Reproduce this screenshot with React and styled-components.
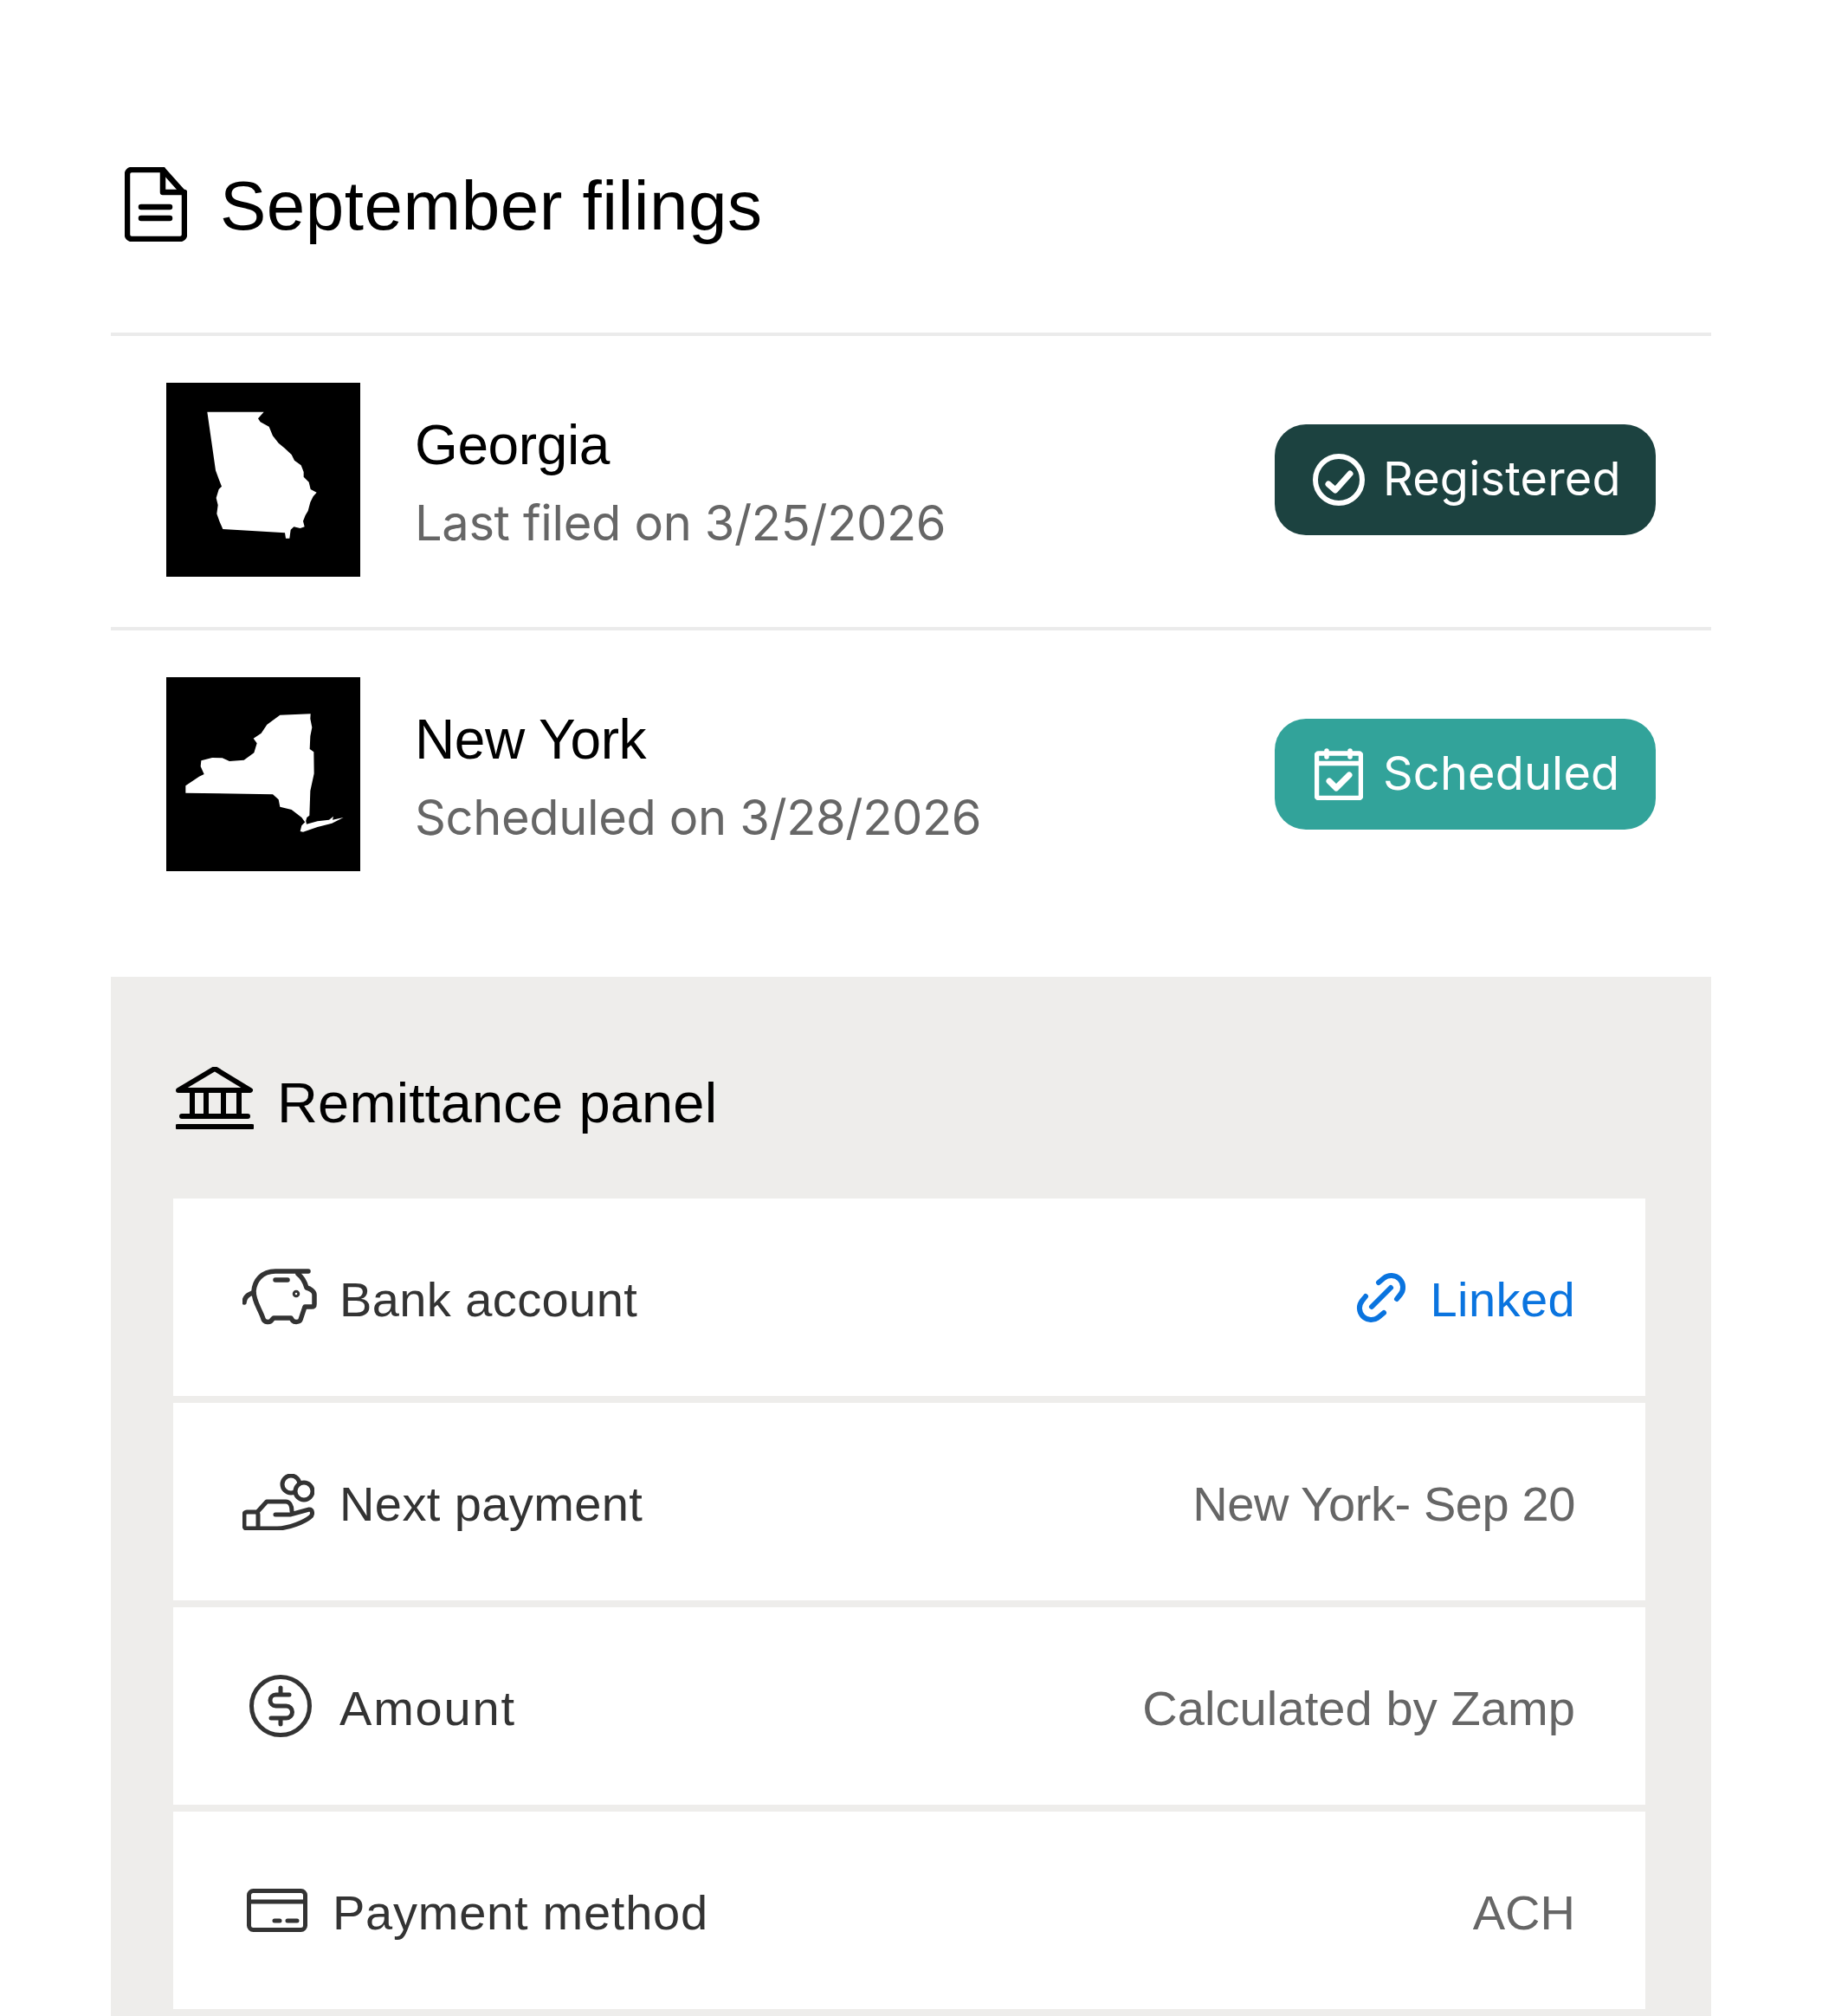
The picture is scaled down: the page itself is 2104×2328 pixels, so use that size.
import styled, { createGlobalStyle } from 'styled-components';

const GlobalStyle = createGlobalStyle`
body {
  margin: 0;
  background: #fff;
  font-family: "Liberation Sans", Arial, sans-serif;
}
`

const Page = styled.div`
padding: 0 128px;
width: 1848px;
`
const Header = styled.div`
display: flex;
align-items: center;
gap: 38px;
height: 86px;
padding: 193px 0 105px 16px;
`
const Heading = styled.h1`
margin: 0;
padding-top: 4px;
font-size: 80px;
font-weight: 400;
letter-spacing: 0.5px;
line-height: 86px;
color: #000;
`
const FilingRow = styled.div`
display: flex;
align-items: center;
gap: 64px;
padding: 54px 64px 58px;
border-top: 4px solid #ebebeb;
`
const StateMap = styled.svg`
display: block;
width: 224px;
height: 224px;
flex-shrink: 0;
`
const FilingText = styled.div`
flex: 1;
padding-top: 10px;
margin-left: -1px;
`
const StateName = styled.div`
font-size: 64px;
letter-spacing: -0.4px;
line-height: 90px;
color: #000;
`
const FiledOn = styled.div`
font-family: Inter, sans-serif;
font-size: 56px;
letter-spacing: -0.35px;
line-height: 90px;
color: #666;
`
const Badge = styled.div`
display: flex;
align-items: center;
gap: 22px;
box-sizing: border-box;
width: 440px;
height: 128px;
padding-left: 44px;
border-radius: 36px;
color: #fff;
background: ${p => p.$bg};
font-family: Inter, sans-serif;
font-size: 54px;
letter-spacing: 0.2px;
`
const BadgeLabel = styled.span`
margin-top: -4px;
margin-left: -1px;
`
const CalendarWrap = styled.span`
display: block;
margin: 0 2px;
`
const Panel = styled.div`
margin-top: 64px;
padding: 104px 76px 8px 72px;
background: #eeedeb;
`
const PanelTitle = styled.div`
display: flex;
align-items: center;
gap: 27px;
height: 72px;
margin: 0 0 80px 3px;
font-size: 65px;
letter-spacing: 0.15px;
color: #000;
`
const PanelHeading = styled.span`
padding-top: 10px;
`
const Cards = styled.div`
display: flex;
flex-direction: column;
gap: 8px;
`
const Card = styled.div`
display: flex;
align-items: center;
justify-content: space-between;
height: 228px;
padding: 0 81px 0 80px;
background: #fff;
font-size: 56px;
`
const Label = styled.div`
display: flex;
align-items: center;
color: #333;
letter-spacing: ${p => p.$ls || 0.4}px;
`
const IconSlot = styled.div`
display: flex;
justify-content: ${p => p.$left ? 'flex-start' : 'center'};
width: ${p => p.$w || 86}px;
margin-right: ${p => p.$gap || 26}px;
`
const Value = styled.div`
display: flex;
align-items: center;
gap: 28px;
color: ${p => p.$color || '#666'};
letter-spacing: ${p => p.$ls || 0}px;
`
const CardText = styled.span`
padding-top: 5px;
`

const Stroke = styled.svg`
display: block;
fill: none;
stroke: currentColor;
stroke-width: ${p => p.$sw || 5};
stroke-linecap: round;
stroke-linejoin: round;
`

const GEORGIA = '178,137 374,137 354,160 362,172 392,188 405,220 425,245 445,262 470,285 480,305 503,322 512,345 512,362 530,380 536,405 557,416 545,430 535,450 527,480 518,495 510,515 515,535 500,540 478,535 467,545 463,575 450,575 447,556 232,543 220,515 211,490 215,460 209,435 218,405 228,395 218,370 207,340'
const NEW_YORK = '103,412 150,380 167,372 155,345 157,325 195,315 230,316 255,327 305,323 340,298 350,265 338,248 365,230 385,200 430,167 536,163 535,180 541,210 535,240 533,285 547,295 548,370 535,430 532,515 523,522 518,540 505,522 470,495 430,485 425,460 405,442 103,437'
const LONG_ISLAND = '505,550 520,535 522,545 560,535 600,530 615,518 612,530 650,522 610,542 560,555 510,572 500,570'

const Map = ({ shapes }) => (
  <StateMap viewBox="36 36 672 672">
    <rect x="36" y="36" width="672" height="672" fill="#000" />
    {shapes.map(s => <polygon key={s} points={s} fill="#fff" />)}
  </StateMap>
)

const App = () => {
  return (
    <>
      <GlobalStyle />
      <Page>
        <Header>
          <Stroke width="72" height="86" viewBox="0 0 72 86" $sw={6.5} color="#000">
            <path d="M3 8a5 5 0 0 1 5-5h36l25 28v47a5 5 0 0 1-5 5H8a5 5 0 0 1-5-5z" />
            <path d="M44 3v26h25M19 46h33M19 59h33" />
          </Stroke>
          <Heading>September filings</Heading>
        </Header>

        <FilingRow>
          <Map shapes={[GEORGIA]} />
          <FilingText>
            <StateName>Georgia</StateName>
            <FiledOn>Last filed on 3/25/2026</FiledOn>
          </FilingText>
          <Badge $bg="#1c4240">
            <Stroke width="60" height="60" viewBox="0 0 60 60" $sw={6}>
              <circle cx="30" cy="30" r="27" />
              <path d="M18 35l8 7 17-19" strokeWidth="7" />
            </Stroke>
            <BadgeLabel>Registered</BadgeLabel>
          </Badge>
        </FilingRow>
        <FilingRow>
          <Map shapes={[NEW_YORK, LONG_ISLAND]} />
          <FilingText>
            <StateName>New York</StateName>
            <FiledOn>Scheduled on 3/28/2026</FiledOn>
          </FilingText>
          <Badge $bg="#32a39a">
            <CalendarWrap>
              <Stroke width="56" height="60" viewBox="0 0 56 60" $sw={5.5}>
                <rect x="2.5" y="6" width="51" height="51.5" rx="2" />
                <path d="M2.5 17.5h51M14 3v7M41 3v7" />
                <path d="M17 38l8 8 15-15" strokeWidth="7" />
              </Stroke>
            </CalendarWrap>
            <BadgeLabel>Scheduled</BadgeLabel>
          </Badge>
        </FilingRow>

        <Panel>
          <PanelTitle>
            <Stroke width="90" height="72" viewBox="0 0 90 72" $sw={6} color="#000">
              <path d="M3 27L45 2l41 25zM19 27v30M35 27v30M55 27v30M73 27v30M7 57h76" />
              <path d="M2 69h86" />
            </Stroke>
            <PanelHeading>Remittance panel</PanelHeading>
          </PanelTitle>
          <Cards>
            <Card>
              <Label>
                <IconSlot>
                  <Stroke width="86" height="66" viewBox="0 0 86 66" $sw={5.5}>
                    <path d="M76 3H38C22 3 14 14 13 26c0 12 7 20 11 32 1 4 8 5 10 1l2-2h20l2 3c2 2 8 2 9-1l5-15h8c2 0 3-1 3-3V30c0-4-5-7-9-8-2-7-6-13-10-16" />
                    <path d="M2 39c0-5 4-10 11-11M38 13h14" />
                    <circle cx="62" cy="29" r="1.5" />
                  </Stroke>
                </IconSlot>
                <CardText>Bank account</CardText>
              </Label>
              <Value $color="#0a74df" $ls={0.4}>
                <Stroke width="58" height="59" viewBox="0 0 58 59" $sw={6}>
                  <path d="M26 12l6-5A13.5 13.5 0 0 1 51 26l-4 5" />
                  <path d="M32 47l-6 5A13.5 13.5 0 0 1 7 33l4-5" />
                  <path d="M40 18L18 40" />
                </Stroke>
                <CardText>Linked</CardText>
              </Value>
            </Card>
            <Card>
              <Label>
                <IconSlot $left>
                  <Stroke width="83" height="65" viewBox="0 0 83 65" $sw={5}>
                    <circle cx="56" cy="12" r="10" />
                    <circle cx="71" cy="20" r="10" fill="#fff" />
                    <path d="M18 43l10-11h22c4 0 7 4 7 11M38 47h17l22-6c4 0 5 6 1 9-6 5-24 13-38 13H18" />
                    <rect x="2" y="44" width="16" height="19" rx="3" />
                  </Stroke>
                </IconSlot>
                <CardText>Next payment</CardText>
              </Label>
              <Value $ls={-0.4}><CardText>New York- Sep 20</CardText></Value>
            </Card>
            <Card>
              <Label $ls={1.8}>
                <IconSlot $w={88} $gap={24}>
                  <Stroke width="72" height="72" viewBox="0 0 72 72" $sw={5}>
                    <circle cx="36" cy="36" r="33.5" />
                    <path d="M46 23H30.5a6.5 6.5 0 0 0 0 13h12a7 7 0 0 1 0 14H25M36 15v8M36 50v7" />
                  </Stroke>
                </IconSlot>
                <CardText>Amount</CardText>
              </Label>
              <Value $ls={0.1}><CardText>Calculated by Zamp</CardText></Value>
            </Card>
            <Card>
              <Label $ls={0.75}>
                <IconSlot $w={80} $gap={24}>
                  <Stroke width="70" height="50" viewBox="0 0 70 50" $sw={5}>
                    <rect x="2.5" y="2.5" width="65" height="45" rx="5" />
                    <path d="M2.5 15h65" />
                    <path d="M32 37h6M47 37h11" />
                  </Stroke>
                </IconSlot>
                <CardText>Payment method</CardText>
              </Label>
              <Value><CardText>ACH</CardText></Value>
            </Card>
          </Cards>
        </Panel>
      </Page>
    </>
  )
}

export default App
